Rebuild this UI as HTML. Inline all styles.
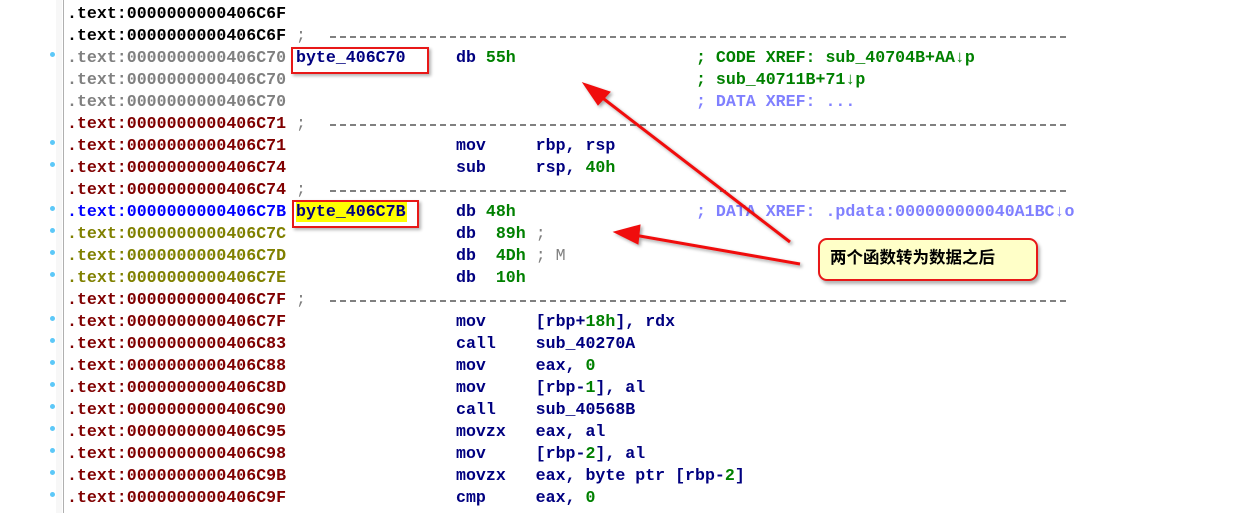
<!DOCTYPE html>
<html><head><meta charset="utf-8"><style>
body{margin:0;width:1244px;height:513px;background:#fff;overflow:hidden;position:relative;font-family:"Liberation Mono",monospace;font-weight:bold;font-size:16.6px}
.r{position:absolute;left:67px;height:22px;line-height:22px;white-space:pre}
.a{position:absolute;white-space:pre;line-height:22px}
.dot{position:absolute;left:50px;width:5px;height:5px;border-radius:50%;background:#5cc8f8}
.k{color:#000}.g{color:#808080}.d{color:#800000}.b{color:#0000ff}.o{color:#808000}
.m{color:#000080}.n{color:#008000}.c{color:#008000}.p{color:#8080ff}
.dash{position:absolute;left:330px;width:736px;height:2px;background:repeating-linear-gradient(90deg,#808080 0 6px,transparent 6px 10px)}
.sc{color:#808080;font-weight:normal}
</style></head><body>
<div style="position:absolute;left:56px;top:0;width:6px;height:513px;background:#f7f7f7"></div>
<div style="position:absolute;left:63px;top:0;width:1px;height:513px;background:#b0b0b0"></div>
<div id="c"></div>
<script>
var rows=[
["k","406C6F","",""],
["k","406C6F","SEP",""],
["g","406C70","L1","<span class=m>db</span> <span class=n>55h</span>","<span class=c>; CODE XREF: sub_40704B+AA↓p</span>",1],
["g","406C70","","","<span class=c>; sub_40711B+71↓p</span>"],
["g","406C70","","","<span class=p>; DATA XREF: ...</span>"],
["d","406C71","SEP",""],
["d","406C71","","<span class=m>mov     rbp, rsp</span>","",1],
["d","406C74","","<span class=m>sub     rsp, </span><span class=n>40h</span>","",1],
["d","406C74","SEP",""],
["b","406C7B","L2","<span class=m>db</span> <span class=n>48h</span>","<span class=p>; DATA XREF: .pdata:000000000040A1BC↓o</span>",1],
["o","406C7C","","<span class=m>db</span>  <span class=n>89h</span> <span class=sc>;</span>","",1],
["o","406C7D","","<span class=m>db</span>  <span class=n>4Dh</span> <span class=sc>; M</span>","",1],
["o","406C7E","","<span class=m>db</span>  <span class=n>10h</span>","",1],
["d","406C7F","SEP",""],
["d","406C7F","","<span class=m>mov     [rbp+</span><span class=n>18h</span><span class=m>], rdx</span>","",1],
["d","406C83","","<span class=m>call    sub_40270A</span>","",1],
["d","406C88","","<span class=m>mov     eax, </span><span class=n>0</span>","",1],
["d","406C8D","","<span class=m>mov     [rbp-</span><span class=n>1</span><span class=m>], al</span>","",1],
["d","406C90","","<span class=m>call    sub_40568B</span>","",1],
["d","406C95","","<span class=m>movzx   eax, al</span>","",1],
["d","406C98","","<span class=m>mov     [rbp-</span><span class=n>2</span><span class=m>], al</span>","",1],
["d","406C9B","","<span class=m>movzx   eax, byte ptr [rbp-</span><span class=n>2</span><span class=m>]</span>","",1],
["d","406C9F","","<span class=m>cmp     eax, </span><span class=n>0</span>","",1]];
var h='';
rows.forEach(function(r,i){var t=3+22*i;
h+='<div class="r '+r[0]+'" style="top:'+t+'px">.text:0000000000'+r[1]+'</div>';
if(r[5])h+='<div class=dot style="top:'+(t+5)+'px"></div>';
if(r[2]=="SEP"){h+='<div class="a sc" style="left:296px;top:'+t+'px">;</div><div class=dash style="top:'+(t+11)+'px"></div>';}
if(r[2]=="L1")h+='<div class="a m" style="left:296px;top:'+t+'px">byte_406C70</div>';
if(r[2]=="L2")h+='<div class="a m" style="left:296px;top:'+(t+1)+'px;background:#ffff00;line-height:20px;padding-right:1px">byte_406C7B</div>';
if(r[3])h+='<div class=a style="left:456px;top:'+t+'px">'+r[3]+'</div>';
if(r[4])h+='<div class=a style="left:696px;top:'+t+'px">'+r[4]+'</div>';
});
document.getElementById('c').innerHTML=h;
</script>
<div style="position:absolute;left:291px;top:47px;width:134px;height:23px;border:2px solid #e81818;box-shadow:2px 2px 3px rgba(0,0,0,.3)"></div>
<div style="position:absolute;left:292px;top:200px;width:123px;height:24px;border:2px solid #e81818;box-shadow:2px 2px 3px rgba(0,0,0,.3)"></div>
<svg style="position:absolute;left:0;top:0" width="1244" height="513">
<defs><filter id="s"><feDropShadow dx="2" dy="2" stdDeviation="1.5" flood-opacity="0.35"/></filter></defs>
<g filter="url(#s)" fill="#f01010" stroke="#f01010">
<line x1="790" y1="242" x2="600" y2="96" stroke-width="3"/>
<polygon points="583,83 610,92 598,105" stroke-width="1"/>
<line x1="800" y1="264" x2="634" y2="235" stroke-width="3"/>
<polygon points="614,232 640,225 638,244" stroke-width="1"/>
</g></svg>
<div style="position:absolute;left:818px;top:238px;width:206px;height:39px;border:2px solid #e81818;border-radius:9px;background:#ffffc8;box-shadow:2px 3px 3px rgba(0,0,0,.3);font-family:'Liberation Sans','Noto Sans CJK SC',sans-serif;font-weight:bold;font-size:16.5px;line-height:37px;padding-left:10px;color:#000">两个函数转为数据之后</div>
</body></html>
